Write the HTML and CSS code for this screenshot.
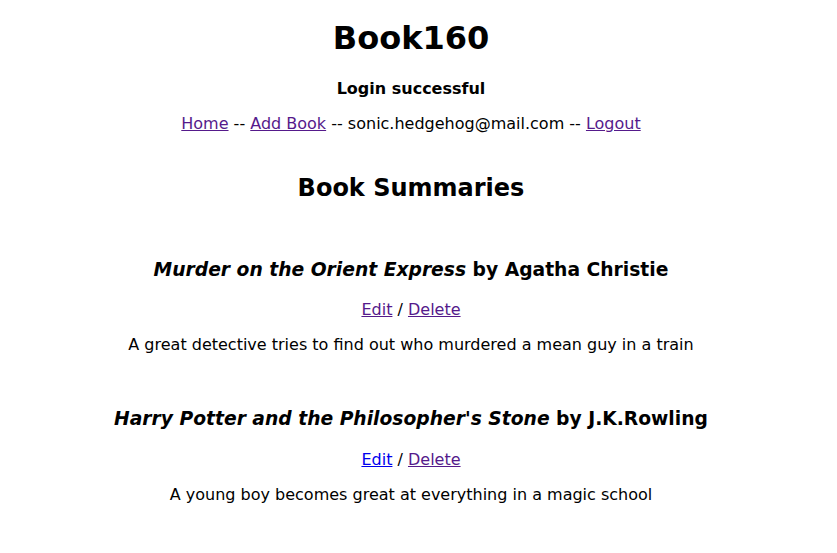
FILE: index.html
```html
<!DOCTYPE html>
<html>
<head>
<meta charset="utf-8">
<title>Book160</title>
<link rel="stylesheet" href="styles.css">
</head>
<body class="page">
<h1 class="title">Book160</h1>
<p class="flash"><strong>Login successful</strong></p>
<div class="nav"><a class="link visited" href="#">Home</a> -- <a class="link visited" href="#">Add Book</a> -- sonic.hedgehog@mail.com -- <a class="link visited" href="#">Logout</a></div>
<br>
<h2 class="section">Book Summaries</h2>
<br>
<h3 class="book"><em>Murder on the Orient Express</em> by Agatha Christie</h3>
<p class="actions"><a class="link visited" href="#">Edit</a> / <a class="link visited" href="#">Delete</a></p>
<p class="summary">A great detective tries to find out who murdered a mean guy in a train</p>
<br>
<h3 class="book"><em>Harry Potter and the Philosopher's Stone</em> by J.K.Rowling</h3>
<p class="actions"><a class="link" href="#">Edit</a> / <a class="link visited" href="#">Delete</a></p>
<p class="summary">A young boy becomes great at everything in a magic school</p>
</body>
</html>
```
FILE: styles.css
```css
.page {
  margin: 8px 23px 8px 8px;
  font-family: "DejaVu Sans", sans-serif;
  font-size: 16px;
  line-height: 1.2;
  color: #000;
  text-align: center;
  background: #fff;
}
.title {
  font-size: 32px;
  margin: 11px 0 21.44px;
}
.flash {
  margin: 16px 0;
}
.section {
  font-size: 24px;
  margin: 21.92px 0 17.92px;
}
.book {
  font-size: 18.72px;
  margin: 18.72px 0;
}
.actions, .summary {
  margin: 16px 0;
}
.link {
  color: #0000ee;
  text-decoration: underline;
}
.link.visited {
  color: #551a8b;
}
```
